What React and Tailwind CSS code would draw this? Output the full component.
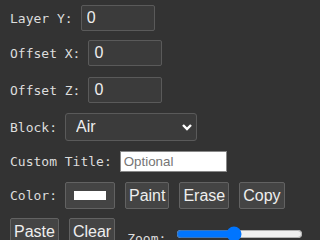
import React, { useState } from "react";

const labelCls = "text-[13px] text-[#dddddd] mr-2 whitespace-pre leading-none";
const numInputCls =
  "w-[74px] h-[26px] px-[5px] bg-[#3b3b3b] border border-[#5a5a5a] rounded-[2px] text-[16px] text-[#eeeeee] outline-none";
const btnCls =
  "h-[27px] px-[3px] bg-[#444444] border border-[#626262] rounded-[2px] text-[16px] leading-[19px] text-[#eeeeee]";
const mono = { fontFamily: '"DejaVu Sans Mono", monospace' };

const App = () => {
  const [zoom, setZoom] = useState(45);

  return (
    <div
      className="w-[320px] h-[240px] overflow-hidden bg-[#333333] pl-[10px] pt-[5px]"
      style={{ fontFamily: '"Liberation Sans", Arial, sans-serif' }}
    >
      {/* numeric fields */}
      <div className="flex items-center mb-[9px]">
        <span className={labelCls} style={mono}>
          Layer Y:
        </span>
        <input type="text" defaultValue="0" className={numInputCls} />
      </div>
      <div className="flex items-center mb-[11px]">
        <span className={labelCls} style={mono}>
          Offset X:
        </span>
        <input type="text" defaultValue="0" className={numInputCls} />
      </div>
      <div className="flex items-center mb-[10px]">
        <span className={labelCls} style={mono}>
          Offset Z:
        </span>
        <input type="text" defaultValue="0" className={numInputCls} />
      </div>

      {/* block select */}
      <div className="flex items-center mb-[10px]">
        <span className={labelCls} style={mono}>
          Block:
        </span>
        <div className="relative">
          <select className="appearance-none w-[132px] h-[28px] pl-[10px] bg-[#3b3b3b] border border-[#5a5a5a] rounded-[3px] text-[16px] text-[#eeeeee] outline-none">
            <option>Air</option>
            <option>Stone</option>
            <option>Dirt</option>
          </select>
          <svg
            className="absolute right-[4px] top-[9px] pointer-events-none"
            width="12"
            height="10"
            viewBox="0 0 12 10"
          >
            <path d="M2 3 L6 7 L10 3" stroke="#ffffff" strokeWidth="2.4" fill="none" />
          </svg>
        </div>
      </div>

      {/* title */}
      <div className="flex items-center mb-[10px]">
        <span className={labelCls} style={mono}>
          Custom Title:
        </span>
        <input
          type="text"
          placeholder="Optional"
          className="w-[107px] h-[21px] px-[3px] bg-white border border-[#888888] text-[13.33px] text-black placeholder:text-[#757575] outline-none"
        />
      </div>

      {/* tools */}
      <div className="flex flex-wrap items-start gap-x-[10px] gap-y-[9px]">
        <div className="flex items-center h-[27px] -mr-[2px]">
          <span className="text-[13px] text-[#dddddd] whitespace-pre leading-none" style={mono}>
            Color:
          </span>
        </div>
        <button className={`${btnCls} w-[50px] flex items-center justify-center`}>
          <span className="block w-[32px] h-[9px] bg-white"></span>
        </button>
        <button className={btnCls}>Paint</button>
        <button className={btnCls}>Erase</button>
        <button className={btnCls}>Copy</button>
        <button className={btnCls}>Paste</button>
        <button className={btnCls}>Clear</button>
        <div className="flex items-center ml-[2px]">
          <span
            className="text-[13px] text-[#dddddd] whitespace-pre leading-none mt-[14px] mr-[10px]"
            style={mono}
          >
            Zoom:
          </span>
          <input
            type="range"
            min="0"
            max="100"
            value={zoom}
            onChange={(e) => setZoom(e.target.value)}
            className="w-[127px] mt-[4px] accent-[#0075ff]"
          />
        </div>
      </div>
    </div>
  );
};

export default App;
